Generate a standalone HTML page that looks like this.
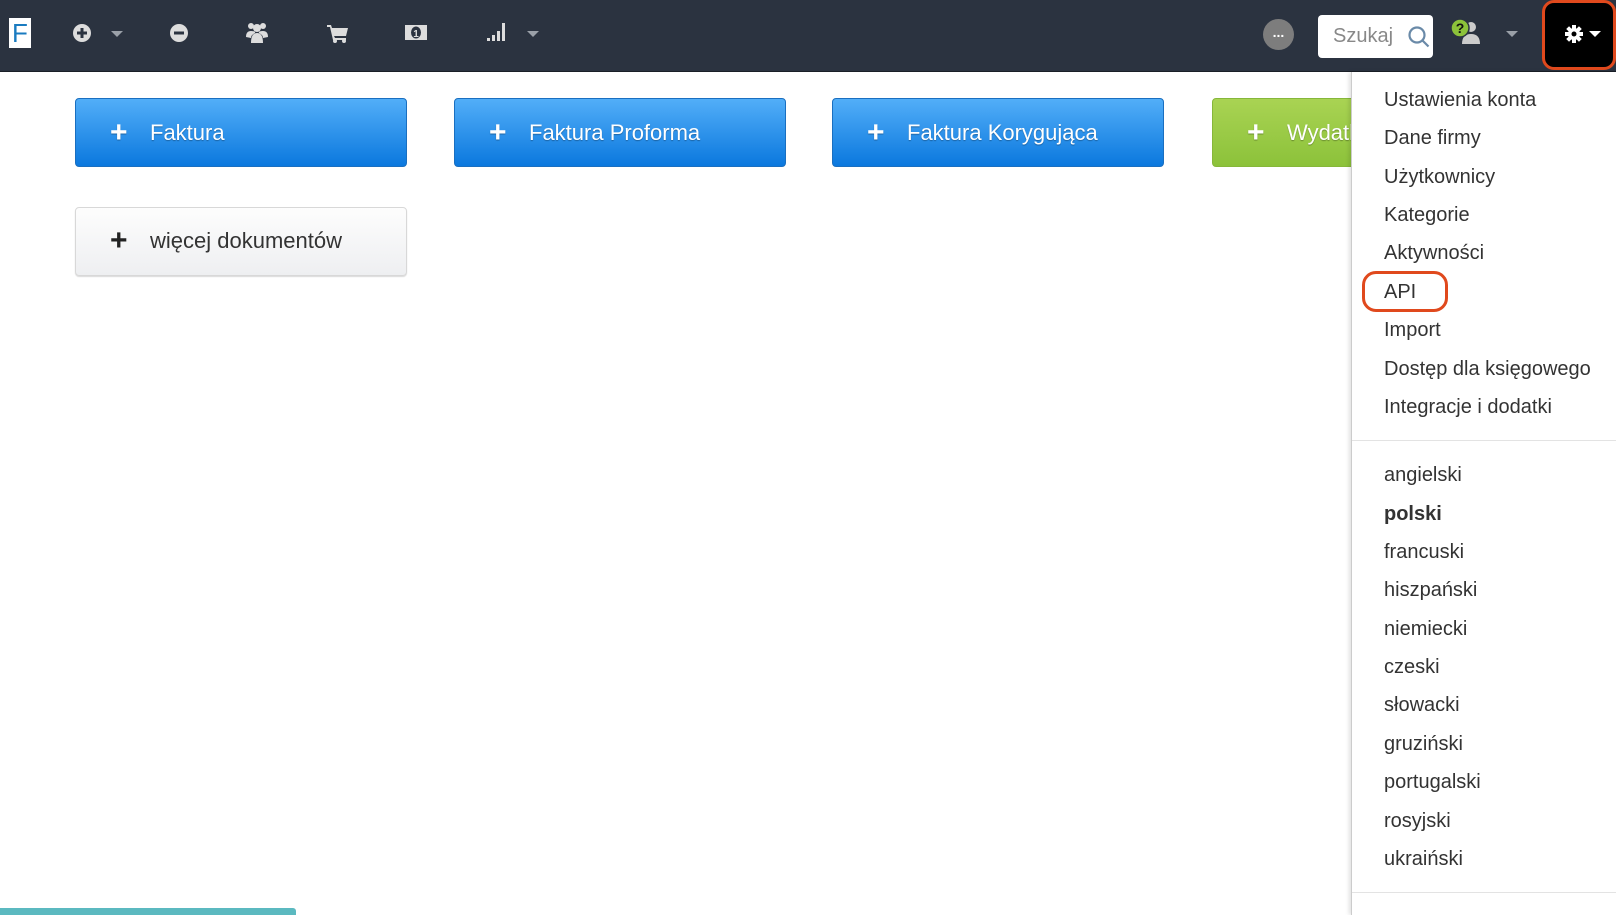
<!DOCTYPE html>
<html><head><meta charset="utf-8"><style>
*{box-sizing:border-box;margin:0;padding:0}
body{width:1616px;height:915px;overflow:hidden;background:#fff;font-family:"Liberation Sans",Arial,sans-serif;position:relative}
.nav{position:absolute;left:0;top:0;width:1616px;height:72px;background:#2b3340;border-bottom:1px solid #1a1f27}
.ic{position:absolute;top:20px}
.caret{position:absolute;width:0;height:0;border-left:6px solid transparent;border-right:6px solid transparent;border-top:6px solid #9aa0a8}
.btn{position:absolute;width:332px;height:69px;border-radius:4px;color:#fff;font-size:22px;line-height:67px;padding-left:74px;text-shadow:0 1px 1px rgba(0,0,0,.3)}
.btn .p{position:absolute;left:34px;top:0;font-weight:bold;font-size:30px}
.blue{background:linear-gradient(#52aef8,#0b78de);border:1px solid #1a6fc0}
.green{background:linear-gradient(#a9d353,#8cc23a);border:1px solid #86b73a}
.gray{background:linear-gradient(#fdfdfd,#eeeff1);border:1px solid #d8d8d8;color:#333;text-shadow:none;box-shadow:0 1px 1px rgba(0,0,0,.15)}
.gray .p{color:#222}
.menu{position:absolute;left:1351px;top:72px;width:265px;height:843px;background:#fff;border-left:1px solid #ccc;box-shadow:-2px 0 4px rgba(0,0,0,.12)}
.menu div{position:absolute;left:32px;font-size:20px;color:#333;margin-top:2px}
.hr{position:absolute;left:0;width:265px;height:1px;background:#e3e3e3}
</style></head><body>
<div class="nav">
 <div style="position:absolute;left:9px;top:18px;width:22px;height:30px;background:#fff;color:#1a7bc0;font-size:26px;line-height:30px;text-align:center">F</div>
 <svg class="ic" style="left:72px;top:23px" width="20" height="20"><circle cx="10" cy="10" r="9" fill="#ddd"/><rect x="5" y="8.5" width="10" height="3" fill="#2b3340"/><rect x="8.5" y="5" width="3" height="10" fill="#2b3340"/></svg>
 <div class="caret" style="left:111px;top:31px"></div>
 <svg class="ic" style="left:169px;top:23px" width="20" height="20"><circle cx="10" cy="10" r="9" fill="#ddd"/><rect x="5" y="8.5" width="10" height="3" fill="#2b3340"/></svg>
 <svg class="ic" style="left:245px;top:21px" width="24" height="22" fill="#ddd"><circle cx="6" cy="5" r="3"/><circle cx="18" cy="5" r="3"/><circle cx="12" cy="7" r="4"/><path d="M1 16q0-6 5-6t4 2q-4 2-4 5z M23 16q0-6-5-6t-4 2q4 2 4 5z M6 22q0-10 6-10t6 10z"/></svg>
 <svg class="ic" style="left:327px;top:24px" width="22" height="19" fill="#ddd"><path d="M0 1h4l1 3h16l-2 8H7l1 2h11v2H6L3 3H0z"/><circle cx="8" cy="17" r="2"/><circle cx="17" cy="17" r="2"/></svg>
 <svg class="ic" style="left:404px;top:24px" width="24" height="17"><rect x="1" y="1" width="22" height="15" fill="#ddd"/><ellipse cx="12" cy="8.5" rx="5" ry="6" fill="#2b3340"/><text x="12" y="13" font-size="10" font-weight="bold" fill="#ddd" text-anchor="middle" font-family="Liberation Sans">1</text></svg>
 <svg class="ic" style="left:487px;top:22px" width="22" height="20" fill="#ddd"><rect x="0" y="16" width="3" height="3"/><rect x="5" y="13" width="3" height="6"/><rect x="10" y="9" width="3" height="10"/><rect x="15" y="1" width="3" height="18"/></svg>
 <div class="caret" style="left:527px;top:31px"></div>
 <div style="position:absolute;left:1263px;top:19px;width:31px;height:31px;border-radius:50%;background:#7d7d7d;color:#fff;font-size:14px;font-weight:bold;text-align:center;line-height:26px">...</div>
 <div style="position:absolute;left:1318px;top:15px;width:115px;height:43px;background:#fff;border-radius:4px;color:#888;font-size:20px;line-height:43px;padding-left:15px">Szukaj</div>
 <svg style="position:absolute;left:1408px;top:26px" width="22" height="22" fill="none" stroke="#6a8aa8" stroke-width="2.2"><circle cx="9" cy="9" r="7.5"/><path d="M14.5 14.5l6 6"/></svg>
 <svg style="position:absolute;left:1450px;top:18px" width="36" height="28"><circle cx="21" cy="9" r="5" fill="#ccc"/><path d="M12 26q0-10 9-10t9 10z" fill="#ccc"/><circle cx="10" cy="10" r="9" fill="#8cc23a" stroke="#2b3340" stroke-width="1.5"/><text x="10" y="15" font-size="14" font-weight="bold" fill="#111" text-anchor="middle" font-family="Liberation Sans">?</text></svg>
 <div class="caret" style="left:1506px;top:31px"></div>
 <div style="position:absolute;left:1542px;top:0;width:74px;height:70px;background:#000;border:3px solid #e0491d;border-radius:12px"></div>
 <svg style="position:absolute;left:1565px;top:25px" width="18" height="18"><g fill="#fff" transform="translate(9 9)"><circle r="6"/><rect x="-2" y="-9" width="4" height="18"/><rect x="-2" y="-9" width="4" height="18" transform="rotate(45)"/><rect x="-2" y="-9" width="4" height="18" transform="rotate(90)"/><rect x="-2" y="-9" width="4" height="18" transform="rotate(135)"/></g><circle cx="9" cy="9" r="2.5" fill="#000"/></svg>
 <div class="caret" style="left:1589px;top:31px;border-top-color:#fff"></div>
</div>
<div class="btn blue" style="left:75px;top:98px"><span class="p">+</span>Faktura</div>
<div class="btn blue" style="left:454px;top:98px"><span class="p">+</span>Faktura Proforma</div>
<div class="btn blue" style="left:832px;top:98px"><span class="p">+</span>Faktura Korygująca</div>
<div class="btn green" style="left:1212px;top:98px"><span class="p">+</span>Wydatki</div>
<div class="btn gray" style="left:75px;top:207px;line-height:65px"><span class="p">+</span>więcej dokumentów</div>
<div class="menu">
 <div style="top:15px">Ustawienia konta</div>
 <div style="top:53px">Dane firmy</div>
 <div style="top:92px">Użytkownicy</div>
 <div style="top:130px">Kategorie</div>
 <div style="top:168px">Aktywności</div>
 <div style="top:207px">API</div>
 <div style="top:245px">Import</div>
 <div style="top:284px">Dostęp dla księgowego</div>
 <div style="top:322px">Integracje i dodatki</div>
 <span class="hr" style="top:368px"></span>
 <div style="top:390px">angielski</div>
 <div style="top:429px;font-weight:bold">polski</div>
 <div style="top:467px">francuski</div>
 <div style="top:505px">hiszpański</div>
 <div style="top:544px">niemiecki</div>
 <div style="top:582px">czeski</div>
 <div style="top:620px">słowacki</div>
 <div style="top:659px">gruziński</div>
 <div style="top:697px">portugalski</div>
 <div style="top:736px">rosyjski</div>
 <div style="top:774px">ukraiński</div>
 <span class="hr" style="top:820px"></span>
</div>
<div style="position:absolute;left:1362px;top:271px;width:86px;height:41px;border:3px solid #e0491d;border-radius:14px"></div>
<div style="position:absolute;left:0;top:908px;width:296px;height:7px;background:#5bb9c0;border-radius:0 3px 0 0"></div>
</body></html>
